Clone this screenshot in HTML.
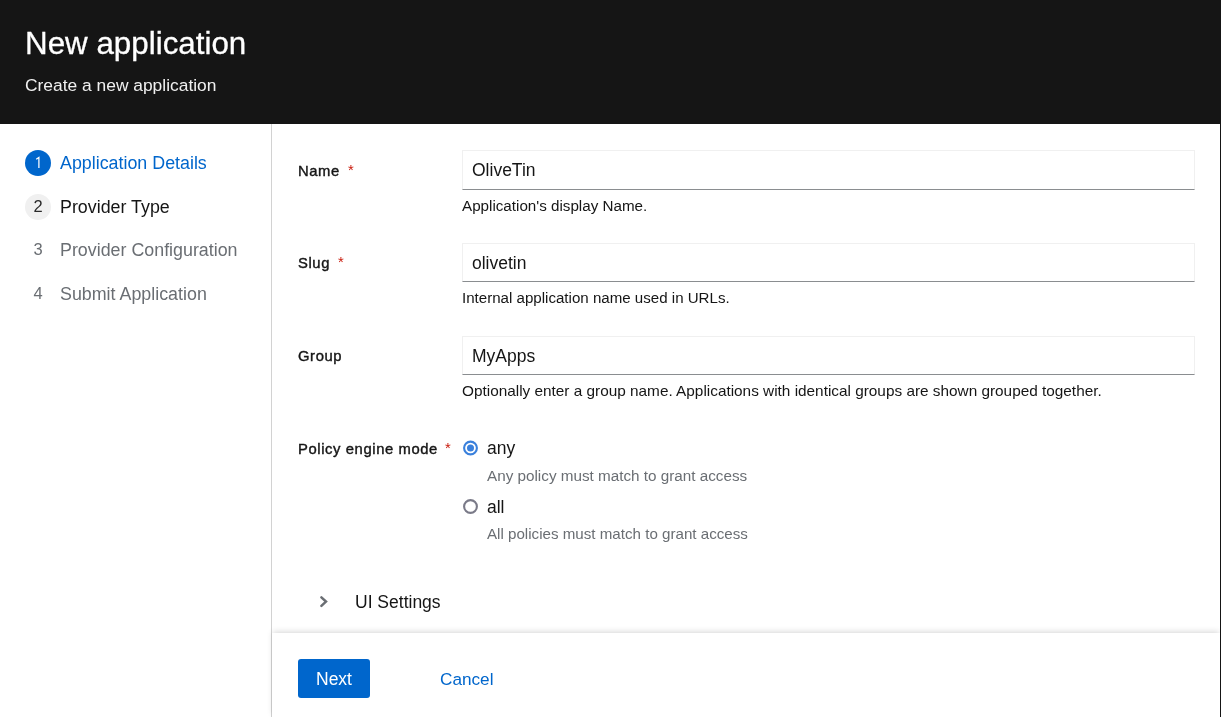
<!DOCTYPE html>
<html><head><meta charset="utf-8">
<style>
*{box-sizing:border-box;margin:0;padding:0}
html,body{width:1221px;height:717px;overflow:hidden;background:#fff;font-family:"Liberation Sans",sans-serif;color:#151515}
.t{position:absolute;white-space:nowrap;will-change:transform}
#hdr{position:absolute;left:0;top:0;width:1221px;height:124px;background:#151515}
#rb{position:absolute;left:1220px;top:0;width:1px;height:717px;background:#151515}
#navb{position:absolute;left:271px;top:124px;width:1px;height:593px;background:#d2d2d2}
.circ{position:absolute;width:26px;height:26px;border-radius:50%;left:25px}
.inp{position:absolute;left:462px;width:733px;height:40px;border:1px solid #f0f0f0;border-bottom-color:#8a8d90}
.radio{position:absolute;left:463px;width:15px;height:15px;border-radius:50%}
#foot{position:absolute;left:272px;top:633px;width:948px;height:84px;background:#fff;box-shadow:0 -2px 6px -1px rgba(3,3,3,.17)}
#next{position:absolute;left:298px;top:659px;width:72px;height:39px;background:#0066cc;border-radius:3px}
</style></head><body>
<div id="hdr"></div>
<div class="t" style="left:25px;top:28px;font-size:31.35px;line-height:31px;color:#fff;-webkit-text-stroke:0.3px #fff">New application</div>
<div class="t" style="left:25px;top:77px;font-size:17.4px;line-height:17.3px;color:#f0f0f0">Create a new application</div>

<div id="navb"></div>
<div class="circ" style="top:150px;background:#0066cc"></div>
<svg class="t" style="left:25px;top:150px" width="26" height="26" viewBox="0 0 26 26"><path d="M11.2 9.3 L13.9 7.5 L13.9 18" fill="none" stroke="#fff" stroke-width="1.25" stroke-linejoin="miter"/></svg>
<div class="t" style="left:60px;top:155px;font-size:17.85px;line-height:17.6px;color:#0066cc">Application Details</div>
<div class="circ" style="top:194px;background:#f0f0f0"></div>
<div class="t" style="left:25px;width:26px;text-align:center;top:198px;font-size:16.5px;line-height:17px;color:#2a2a2a">2</div>
<div class="t" style="left:60px;top:199px;font-size:17.85px;line-height:17.6px;color:#151515">Provider Type</div>
<div class="t" style="left:25px;width:26px;text-align:center;top:241px;font-size:16.5px;line-height:17px;color:#6a6e73">3</div>
<div class="t" style="left:60px;top:242px;font-size:17.85px;line-height:17.6px;color:#6a6e73">Provider Configuration</div>
<div class="t" style="left:25px;width:26px;text-align:center;top:285px;font-size:16.5px;line-height:17px;color:#6a6e73">4</div>
<div class="t" style="left:60px;top:286px;font-size:17.85px;line-height:17.6px;color:#6a6e73">Submit Application</div>

<div class="t" style="left:298px;top:164px;font-size:14.8px;line-height:14.8px;letter-spacing:0.6px;-webkit-text-stroke:0.4px #151515">Name</div>
<div class="t" style="left:348px;top:163px;font-size:14.8px;line-height:14.8px;color:#c9190b">*</div>
<div class="inp" style="top:150px"></div>
<div class="t" style="left:472px;top:162px;font-size:17.5px;line-height:17.5px">OliveTin</div>
<div class="t" style="left:462px;top:198px;font-size:15.2px;line-height:15.1px">Application's display Name.</div>

<div class="t" style="left:298px;top:256px;font-size:14.8px;line-height:14.8px;letter-spacing:0.6px;-webkit-text-stroke:0.4px #151515">Slug</div>
<div class="t" style="left:338px;top:255px;font-size:14.8px;line-height:14.8px;color:#c9190b">*</div>
<div class="inp" style="top:243px;height:39px"></div>
<div class="t" style="left:472px;top:255px;font-size:17.5px;line-height:17.5px">olivetin</div>
<div class="t" style="left:462px;top:290px;font-size:15.1px;line-height:15.1px">Internal application name used in URLs.</div>

<div class="t" style="left:298px;top:349px;font-size:14.8px;line-height:14.8px;letter-spacing:0.6px;-webkit-text-stroke:0.4px #151515">Group</div>
<div class="inp" style="top:336px;height:39px"></div>
<div class="t" style="left:472px;top:348px;font-size:17.5px;line-height:17.5px">MyApps</div>
<div class="t" style="left:462px;top:383px;font-size:15.35px;line-height:15.1px">Optionally enter a group name. Applications with identical groups are shown grouped together.</div>

<div class="t" style="left:298px;top:442px;font-size:14.8px;line-height:14.8px;letter-spacing:0.6px;-webkit-text-stroke:0.4px #151515">Policy engine mode</div>
<div class="t" style="left:445px;top:441px;font-size:14.8px;line-height:14.8px;color:#c9190b">*</div>
<svg class="t" style="left:460px;top:438px" width="21" height="21" viewBox="0 0 21 21"><circle cx="10.5" cy="10" r="6.4" fill="none" stroke="#3a80dc" stroke-width="2.1"/><circle cx="10.5" cy="10" r="3.5" fill="#3a80dc"/></svg>
<div class="t" style="left:487px;top:440px;font-size:17.5px;line-height:17.5px">any</div>
<div class="t" style="left:487px;top:468px;font-size:15.25px;line-height:15.1px;color:#6a6e73">Any policy must match to grant access</div>
<svg class="t" style="left:460px;top:496px" width="21" height="21" viewBox="0 0 21 21"><circle cx="10.5" cy="10.5" r="6.4" fill="none" stroke="#7a7a88" stroke-width="2.1"/></svg>
<div class="t" style="left:487px;top:499px;font-size:17.5px;line-height:17.5px">all</div>
<div class="t" style="left:487px;top:525.5px;font-size:15.15px;line-height:15.1px;color:#6a6e73">All policies must match to grant access</div>

<svg class="t" style="left:318px;top:595px" width="12" height="14" viewBox="0 0 12 14"><path d="M3.4 2.3 L8 6.6 L3.4 10.9" fill="none" stroke="#6a6e73" stroke-width="2.5" stroke-linecap="round" stroke-linejoin="miter"/></svg>
<div class="t" style="left:355px;top:594px;font-size:17.5px;line-height:17.5px">UI Settings</div>

<div id="foot"></div>
<div id="next"></div>
<div class="t" style="left:316px;top:671px;font-size:17.5px;line-height:17.5px;color:#fff">Next</div>
<div class="t" style="left:440px;top:671px;font-size:17.2px;line-height:17.5px;color:#0066cc">Cancel</div>
<div id="rb"></div>
</body></html>
